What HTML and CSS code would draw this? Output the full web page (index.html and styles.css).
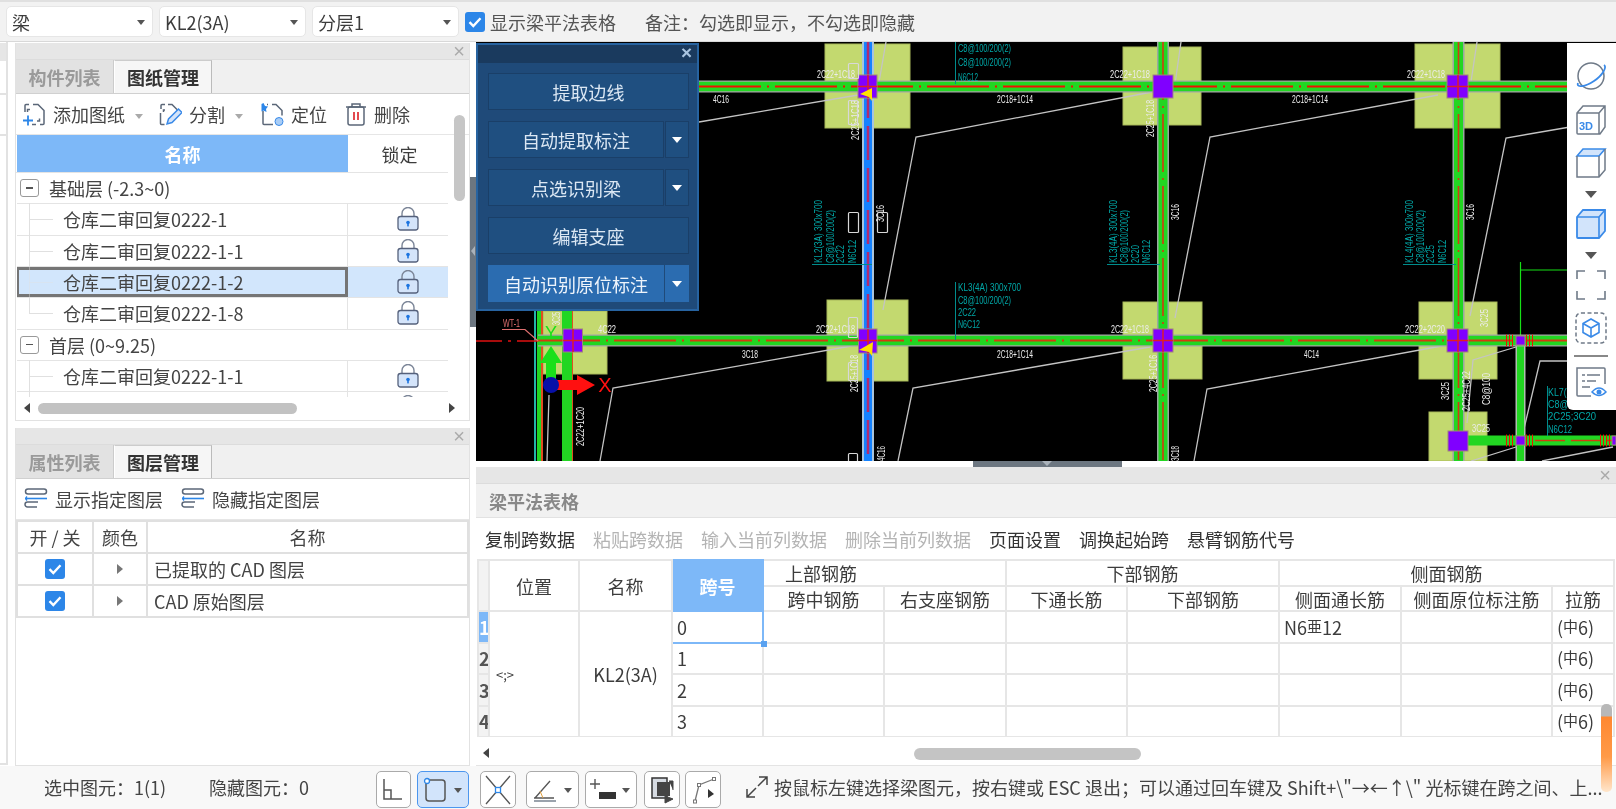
FILE: index.html
```html
<!DOCTYPE html>
<html lang="zh-CN">
<head>
<meta charset="utf-8">
<title>梁平法表格</title>
<link rel="stylesheet" href="styles.css">
</head>
<body>
<svg class="defs" width="0" height="0" aria-hidden="true">
  <defs>
    <symbol id="lock" viewBox="0 0 22 24">
      <path d="M5 10V6.5a6 6 0 0 1 12 0V10" fill="none" stroke="#7c8698" stroke-width="1.4"/>
      <rect x="1" y="9.5" width="20" height="13.5" rx="2.5" fill="#d4e4fa" stroke="#55617c" stroke-width="1.3"/>
      <circle cx="11" cy="15.5" r="1.8" fill="#1c74e0"/><rect x="10.2" y="16" width="1.6" height="3.4" fill="#1c74e0"/>
    </symbol>
    <symbol id="check" viewBox="0 0 20 20">
      <rect x="0" y="0" width="20" height="20" rx="3" fill="#2c86e8"/>
      <path d="M4.5 10.2l3.8 3.8 7.2-7.8" fill="none" stroke="#fff" stroke-width="2.4"/>
    </symbol>
    <symbol id="layer" viewBox="0 0 24 24">
      <rect x="1.5" y="2" width="21" height="5" rx="2.5" fill="none" stroke="#5b6778" stroke-width="1.5"/>
      <path d="M1 11.5h22" stroke="#2c86e8" stroke-width="1.6"/><path d="M3 9.5q-2 2 0 4" fill="none" stroke="#2c86e8" stroke-width="1.5"/>
      <path d="M13 20H3.5a2.5 2.5 0 0 1 0-5H14" fill="none" stroke="#5b6778" stroke-width="1.5"/>
    </symbol>
  </defs>
</svg>
<div class="app">
  <header class="topbar">
    <div class="select">梁<i class="caret"></i></div>
    <div class="select">KL2(3A)<i class="caret"></i></div>
    <div class="select">分层1<i class="caret"></i></div>
    <svg class="chk top-chk" width="20" height="20"><use href="#check"/></svg>
    <span class="top-label">显示梁平法表格</span>
    <span class="top-note">备注：勾选即显示，不勾选即隐藏</span>
  </header>

  <main class="main">
    <div class="side-strip"><div class="strip-title"></div><div class="strip-a"></div><div class="strip-b"></div></div>

    <div class="left">
      <section class="panel panel-top">
        <div class="titlebar"><span class="x">×</span></div>
        <div class="tabs"><span class="tab">构件列表</span><span class="tab on">图纸管理</span></div>
        <div class="tools">
          <svg class="ico" width="24" height="24" viewBox="0 0 24 24"><path d="M3 10V3.5a1 1 0 0 1 1-1h3M11 2.5h5l6 6v13a1 1 0 0 1-1 1h-3M22 12v4M10 22.5h4M8 7.5H5.5v2.5M15 19h2.5v-2.5" fill="none" stroke="#5b6778" stroke-width="1.5"/><path d="M1 18.5h10M6 13.5v10" stroke="#2c86e8" stroke-width="1.8"/></svg>
          <span class="lbl">添加图纸</span><i class="caret grey c1"></i>
          <svg class="ico i2" width="24" height="24" viewBox="0 0 24 24"><path d="M3 7V3.5a1 1 0 0 1 1-1h3M10 2.5h4l5 5v2M2.5 11v10.500a1 1 0 0 0 1 1h3M7 8H5.500v2" fill="none" stroke="#5b6778" stroke-width="1.5"/><path d="M9 22l1.500-5 10-10 3.500 3.500-10 10z" fill="#d4e4fa" stroke="#3a8ae8" stroke-width="1.5"/></svg>
          <span class="lbl">分割</span><i class="caret grey c2"></i>
          <svg class="ico i3" width="24" height="24" viewBox="0 0 24 24"><path d="M3 9v12.500a1 1 0 0 0 1 1h9M12 2.500h4l6 6v5M7 2.500h1" fill="none" stroke="#5b6778" stroke-width="1.500"/><path d="M1.500 2l2-1 1.500 3 3 .5-2 2.500.500 3-3-1.500-2 1z" fill="#2c86e8"/><circle cx="19" cy="19.500" r="4" fill="#a9cdf6" stroke="#3a8ae8"/></svg>
          <span class="lbl">定位</span>
          <svg class="ico i4" width="22" height="24" viewBox="0 0 22 24"><path d="M1 5h20M7 4.500V2h8v2.500" fill="none" stroke="#5b6778" stroke-width="1.500"/><rect x="3" y="5" width="16" height="18" rx="2" fill="none" stroke="#5b6778" stroke-width="1.500"/><path d="M9 10v8M13 10v8" stroke="#e0383e" stroke-width="1.800"/></svg>
          <span class="lbl">删除</span>
        </div>
        <div class="tree">
          <div class="tree-head"><span class="th-name">名称</span><span class="th-lock">锁定</span></div>
          <div class="tree-body">
            <div class="row group"><span class="exp"></span>基础层 (-2.3~0)</div>
            <div class="row"><span class="nm">仓库二审回复0222-1</span><span class="lk"><svg width="22" height="24"><use href="#lock"/></svg></span></div>
            <div class="row"><span class="nm">仓库二审回复0222-1-1</span><span class="lk"><svg width="22" height="24"><use href="#lock"/></svg></span></div>
            <div class="row sel"><span class="nm">仓库二审回复0222-1-2</span><span class="lk"><svg width="22" height="24"><use href="#lock"/></svg></span></div>
            <div class="row last"><span class="nm">仓库二审回复0222-1-8</span><span class="lk"><svg width="22" height="24"><use href="#lock"/></svg></span></div>
            <div class="row group"><span class="exp"></span>首层 (0~9.25)</div>
            <div class="row"><span class="nm">仓库二审回复0222-1-1</span><span class="lk"><svg width="22" height="24"><use href="#lock"/></svg></span></div>
            <div class="row"><span class="nm">仓库二审回复0222-1-2</span><span class="lk"><svg width="22" height="24"><use href="#lock"/></svg></span></div>
          </div>
          <div class="vscroll"></div>
          <div class="hscroll"><i class="arr-l"></i><span class="thumb"></span><i class="arr-r"></i></div>
        </div>
      </section>

      <section class="panel panel-bot">
        <div class="titlebar"><span class="x">×</span></div>
        <div class="tabs"><span class="tab">属性列表</span><span class="tab on">图层管理</span></div>
        <div class="tools tools2">
          <svg class="ico" width="24" height="24"><use href="#layer"/></svg><span class="lbl">显示指定图层</span>
          <svg class="ico i5" width="24" height="24"><use href="#layer"/></svg><span class="lbl">隐藏指定图层</span>
        </div>
        <table class="layers">
          <colgroup><col class="lc1"><col class="lc2"><col></colgroup>
          <tr><th>开 / 关</th><th>颜色</th><th>名称</th></tr>
          <tr><td class="ctr"><svg class="chk" width="20" height="20"><use href="#check"/></svg></td><td class="ctr"><i class="tri"></i></td><td class="nm2">已提取的 CAD 图层</td></tr>
          <tr><td class="ctr"><svg class="chk" width="20" height="20"><use href="#check"/></svg></td><td class="ctr"><i class="tri"></i></td><td class="nm2">CAD 原始图层</td></tr>
        </table>
      </section>
    </div>

    <div class="gutter"><div class="grip"><i></i></div></div>

    <div class="right">
      <div class="canvas">
        <svg class="cad" width="1140" height="419" viewBox="476 42 1140 419" font-family="Liberation Sans, sans-serif">
          <g fill="#c3d96f" stroke="#a8b85a">
            <rect x="825" y="44" width="85" height="84"/><rect x="1123" y="47" width="78" height="78"/><rect x="1415" y="44" width="85" height="84"/>
            <rect x="827" y="300" width="81" height="81"/><rect x="1123" y="302" width="79" height="77"/><rect x="1419" y="302" width="78" height="77"/>
            <rect x="543" y="311" width="64" height="63"/><rect x="1429" y="412" width="58" height="49"/>
          </g>
          <!-- diagonal wall outlines -->
          <g fill="none" stroke="#c4c4c4" stroke-width="1.300">
            <path d="M699 122L858 95M886 42L878 88M883 310L916 137L1152 92M1181 42L1173 98M1175 318L1210 137L1438 95M1477 42L1469 95M1470 316L1506 138L1570 127"/>
            <path d="M600 461L613 388L857 345M898 461L913 388L1150 347M1194 461L1207 389L1447 345M1467 423L1473 360L1516 347M1523 433L1540 361H1567M1471 461L1516 447M1542 461L1613 447M547 461L549 395"/>
          </g>
          <!-- left vertical members -->
          <path d="M535 311V461" stroke="#30f0e0" stroke-width="1.500"/><path d="M539 311V461" stroke="#22d622" stroke-width="4"/><path d="M542 311V461" stroke="#e05020" stroke-width="2"/>
          <path d="M567.500 311V461" stroke="#22d622" stroke-width="11"/><path d="M572.500 311V461" stroke="#e05020" stroke-width="1"/>
          <path d="M476 341H538" stroke="#e01010" stroke-width="1.500" stroke-dasharray="26 6 3 6"/>
          <!-- beams vertical -->
          <g fill="none">
            <path d="M868 42V461" stroke="#a9c4dc" stroke-width="12"/><path d="M868 42V461" stroke="#1482ff" stroke-width="8"/><path d="M868 42V461" stroke="#b02a70" stroke-width="2.500" stroke-dasharray="34 8"/>
            <path d="M1163 42V461M1458.500 42V461" stroke="#9aa8a0" stroke-width="12"/><path d="M1163 42V461M1458.500 42V461" stroke="#22d622" stroke-width="9"/><path d="M1163 42V461M1458.500 42V461" stroke="#d43a10" stroke-width="1.600" stroke-dasharray="58 6 2 6"/>
            <path d="M1520.500 345V461" stroke="#b0c0b0" stroke-width="10"/><path d="M1520.500 345V461" stroke="#22d622" stroke-width="7"/>
            <path d="M1520.500 262V336M1521 270H1570" stroke="#16e016" stroke-width="1.200"/>
          </g>
          <!-- beams horizontal -->
          <g fill="none">
            <path d="M699 86.500H1570M538 340.500H1570" stroke="#a5a5a5" stroke-width="12"/><path d="M699 86.500H1570M538 340.500H1570" stroke="#22d622" stroke-width="9.500"/>
            <path d="M699 86.500H1570" stroke="#f01000" stroke-width="1.800" stroke-dasharray="62 6 2 6"/><path d="M538 340.500H1570" stroke="#d43a10" stroke-width="1.800" stroke-dasharray="62 6 2 6"/>
            <path d="M1468 440.500H1616" stroke="#22d622" stroke-width="10"/><path d="M1535 440.500H1616" stroke="#d43a10" stroke-width="1.500" stroke-dasharray="30 6"/>
            <path d="M1506 340.500H1515M1526 340.500H1535M1506 440.500H1515M1526 440.500H1535M1600 440.500H1611" stroke="#f01000" stroke-width="12" stroke-dasharray="1 2"/>
          </g>
          <!-- columns -->
          <g fill="#8000ff" stroke="#a08878" stroke-width="1">
            <rect x="858" y="75" width="19" height="23"/><rect x="1153" y="75" width="20" height="23"/><rect x="1447" y="75" width="21" height="23"/>
            <rect x="858.500" y="329" width="18.500" height="24"/><rect x="1153" y="329" width="20" height="23"/><rect x="1447" y="329" width="21" height="23"/>
            <rect x="563" y="329" width="19.500" height="23"/><rect x="1448" y="431" width="20" height="20"/><rect x="1516" y="336" width="9" height="9"/><rect x="1516" y="436" width="9" height="9"/><rect x="1612" y="436" width="4" height="9"/>
          </g>
          <path d="M1458 75V98M1447 86.500H1468M1163 329V352M1153 340.500H1173M1458 329V352M1447 340.500H1468M868 75V98M858 86.500H877M868 329V353M858 340.500H877M573 329V352M563 340.500H582" stroke="#e02020" stroke-width="1.400"/>
          <path d="M872 88l-12 6 9 3 3 4zM873 342l-14 8 10 2 3 4z" fill="#ffe000"/>
          <!-- white labels -->
          <g fill="#ececec" font-size="10">
            <text x="713" y="103" textLength="16" lengthAdjust="spacingAndGlyphs">4C16</text>
            <text x="817" y="78" textLength="38" lengthAdjust="spacingAndGlyphs">2C22+1C18</text>
            <text x="1110" y="78" textLength="40" lengthAdjust="spacingAndGlyphs">2C22+1C18</text>
            <text x="1407" y="78" textLength="38" lengthAdjust="spacingAndGlyphs">2C22+1C18</text>
            <text x="997" y="103" textLength="36" lengthAdjust="spacingAndGlyphs">2C18+1C14</text>
            <text x="1292" y="103" textLength="36" lengthAdjust="spacingAndGlyphs">2C18+1C14</text>
            <text x="598" y="333" textLength="18" lengthAdjust="spacingAndGlyphs">4C22</text>
            <text x="816" y="333" textLength="39" lengthAdjust="spacingAndGlyphs">2C22+1C18</text>
            <text x="742" y="358" textLength="16" lengthAdjust="spacingAndGlyphs">3C18</text>
            <text x="997" y="358" textLength="36" lengthAdjust="spacingAndGlyphs">2C18+1C14</text>
            <text x="1111" y="333" textLength="38" lengthAdjust="spacingAndGlyphs">2C22+1C18</text>
            <text x="1405" y="333" textLength="40" lengthAdjust="spacingAndGlyphs">2C22+2C20</text>
            <text x="1304" y="358" textLength="15" lengthAdjust="spacingAndGlyphs">4C14</text>
            <text x="1472" y="432" textLength="18" lengthAdjust="spacingAndGlyphs">3C25</text>
            <text transform="translate(859 140) rotate(-90)" textLength="40" lengthAdjust="spacingAndGlyphs">2C25+1C18</text>
            <text transform="translate(884 222) rotate(-90)" textLength="17" lengthAdjust="spacingAndGlyphs">3C16</text>
            <text transform="translate(1154 137) rotate(-90)" textLength="37" lengthAdjust="spacingAndGlyphs">2C25+1C18</text>
            <text transform="translate(1179 220) rotate(-90)" textLength="16" lengthAdjust="spacingAndGlyphs">3C16</text>
            <text transform="translate(1474 220) rotate(-90)" textLength="16" lengthAdjust="spacingAndGlyphs">3C16</text>
            <text transform="translate(858 392) rotate(-90)" textLength="37" lengthAdjust="spacingAndGlyphs">2C25+1C18</text>
            <text transform="translate(885 461) rotate(-90)" textLength="15" lengthAdjust="spacingAndGlyphs">4C16</text>
            <text transform="translate(1157 392) rotate(-90)" textLength="37" lengthAdjust="spacingAndGlyphs">2C25+1C16</text>
            <text transform="translate(1179 461) rotate(-90)" textLength="15" lengthAdjust="spacingAndGlyphs">3C18</text>
            <text transform="translate(584 446) rotate(-90)" textLength="39" lengthAdjust="spacingAndGlyphs">2C22+1C20</text>
            <text transform="translate(560 325) rotate(-90)" textLength="13" lengthAdjust="spacingAndGlyphs">3C25</text>
            <text transform="translate(1488 327) rotate(-90)" textLength="18" lengthAdjust="spacingAndGlyphs">3C25</text>
            <text transform="translate(1449 400) rotate(-90)" textLength="18" lengthAdjust="spacingAndGlyphs">3C25</text>
            <text transform="translate(1470 411) rotate(-90)" textLength="40" lengthAdjust="spacingAndGlyphs">2C25+4C22</text>
            <text transform="translate(1490 405) rotate(-90)" textLength="32" lengthAdjust="spacingAndGlyphs">C8@100</text>
          </g>
          <g fill="none" stroke="#d8d8d8" stroke-width="1.200">
            <rect x="848.500" y="212.500" width="10" height="20" rx="1"/><rect x="877.500" y="212.500" width="10" height="20" rx="1"/>
            <rect x="848.500" y="63.500" width="10" height="15" rx="1"/><rect x="848.500" y="317.500" width="9" height="20" rx="1"/>
            <rect x="848.500" y="453.500" width="9" height="12" rx="1"/><rect x="848.500" y="362.500" width="9" height="18" rx="1"/><rect x="848.500" y="100.500" width="9" height="24" rx="1"/>
          </g>
          <!-- teal labels -->
          <g fill="#00a8a8" font-size="10">
            <text transform="translate(822 263) rotate(-90)" textLength="63" lengthAdjust="spacingAndGlyphs">KL2(3A) 300x700</text>
            <text transform="translate(834 263) rotate(-90)" textLength="53" lengthAdjust="spacingAndGlyphs">C8@100/200(2)</text>
            <text transform="translate(844 263) rotate(-90)" textLength="18" lengthAdjust="spacingAndGlyphs">2C22</text>
            <text transform="translate(856 263) rotate(-90)" textLength="23" lengthAdjust="spacingAndGlyphs">N6C12</text>
            <text transform="translate(1117 263) rotate(-90)" textLength="63" lengthAdjust="spacingAndGlyphs">KL3(4A) 300x700</text>
            <text transform="translate(1128 263) rotate(-90)" textLength="53" lengthAdjust="spacingAndGlyphs">C8@100/200(2)</text>
            <text transform="translate(1139 263) rotate(-90)" textLength="18" lengthAdjust="spacingAndGlyphs">2C20</text>
            <text transform="translate(1150 263) rotate(-90)" textLength="23" lengthAdjust="spacingAndGlyphs">N6C12</text>
            <text transform="translate(1413 263) rotate(-90)" textLength="63" lengthAdjust="spacingAndGlyphs">KL4(4A) 300x700</text>
            <text transform="translate(1424 263) rotate(-90)" textLength="53" lengthAdjust="spacingAndGlyphs">C8@100/200(2)</text>
            <text transform="translate(1434 263) rotate(-90)" textLength="18" lengthAdjust="spacingAndGlyphs">2C25</text>
            <text transform="translate(1446 263) rotate(-90)" textLength="23" lengthAdjust="spacingAndGlyphs">N6C12</text>
            <text x="958" y="66" textLength="53" lengthAdjust="spacingAndGlyphs">C8@100/200(2)</text>
            <text x="958" y="82" textLength="18" lengthAdjust="spacingAndGlyphs" visibility="hidden">2C22</text>
            <text x="958" y="291" textLength="63" lengthAdjust="spacingAndGlyphs">KL3(4A) 300x700</text>
            <text x="958" y="304" textLength="53" lengthAdjust="spacingAndGlyphs">C8@100/200(2)</text>
            <text x="958" y="316" textLength="18" lengthAdjust="spacingAndGlyphs">2C22</text>
            <text x="958" y="328" textLength="22" lengthAdjust="spacingAndGlyphs">N6C12</text>
            <text x="958" y="52" textLength="53" lengthAdjust="spacingAndGlyphs">C8@100/200(2)</text>
            <text x="958" y="81" textLength="20" lengthAdjust="spacingAndGlyphs">N6C12</text>
            <text x="1548" y="396" textLength="48" lengthAdjust="spacingAndGlyphs">KL7(1) 300x</text>
            <text x="1548" y="408" textLength="48" lengthAdjust="spacingAndGlyphs">C8@100/20</text>
            <text x="1548" y="420" textLength="48" lengthAdjust="spacingAndGlyphs">2C25;3C20</text>
            <text x="1548" y="433" textLength="24" lengthAdjust="spacingAndGlyphs">N6C12</text>
          </g>
          <path d="M812 264.500H872M1107 264.500H1160M1403 264.500H1456M955.500 42V84M955.500 282V340M1547.500 386V436" stroke="#008c8c" fill="none"/>
          <!-- wall mark and axes -->
          <text x="503" y="327" fill="#e07070" font-size="10" textLength="17" lengthAdjust="spacingAndGlyphs">WT-1</text>
          <path d="M502 329.500H525L538 341" fill="none" stroke="#e07070" stroke-width="1.200"/>
          <path d="M551 346l11 17h-6v22h-10v-22h-6z" fill="#1ae01a"/>
          <text x="551" y="339" fill="#1ae01a" font-size="18" text-anchor="middle">Y</text>
          <path d="M557 380h20v-5l18 10-18 10v-5h-20z" fill="#ff1010"/>
          <circle cx="551" cy="385" r="8" fill="#0810a8"/>
          <text x="605" y="392" fill="#ff1010" font-size="20" text-anchor="middle">X</text>
        </svg>

        <div class="float">
          <div class="float-title"><span>×</span></div>
          <div class="fbtn"><span class="fmain">提取边线</span></div>
          <div class="fbtn"><span class="fmain">自动提取标注</span><span class="farr"></span></div>
          <div class="fbtn"><span class="fmain">点选识别梁</span><span class="farr"></span></div>
          <div class="fbtn"><span class="fmain">编辑支座</span></div>
          <div class="fbtn act"><span class="fmain">自动识别原位标注</span><span class="farr"></span></div>
        </div>

        <div class="viewbar">
          <svg width="32" height="32" viewBox="0 0 32 32"><circle cx="16" cy="15" r="13" fill="none" stroke="#6f7a88" stroke-width="1.500"/><path d="M3 22C1 27 10 26 19 20S32 6 29 4" fill="none" stroke="#3a8ae8" stroke-width="1.800"/></svg>
          <svg width="32" height="32" viewBox="0 0 32 32"><path d="M2 9l6-7h22v21l-5 7H3a1 1 0 0 1-1-1zM2 9h22l6-7M24 9v21" fill="#fff" stroke="#6f7a88" stroke-width="1.500"/><text x="4" y="26" font-family="Liberation Sans, sans-serif" font-size="11" font-weight="700" fill="#3a8ae8">3D</text></svg>
          <svg width="32" height="32" viewBox="0 0 32 32"><path d="M2 9l6-7h22l-6 7z" fill="#d2e4fb" stroke="#3a8ae8" stroke-width="1.600"/><path d="M2 9v21h22l6-7V2M24 9v21" fill="none" stroke="#6f7a88" stroke-width="1.500"/></svg>
          <i class="vb-arrow"></i>
          <svg width="32" height="32" viewBox="0 0 32 32"><path d="M2 9l6-7h22v21l-6 7H3a1 1 0 0 1-1-1z" fill="#d2e4fb" stroke="#3a8ae8" stroke-width="1.800"/><path d="M2 9h22l6-7M24 9v21" fill="none" stroke="#3a8ae8" stroke-width="1.600"/></svg>
          <i class="vb-arrow"></i>
          <svg width="32" height="32" viewBox="0 0 32 32"><path d="M2 10V2h8M22 2h8v8M30 22v8h-8M10 30H2v-8" fill="none" stroke="#6f7a88" stroke-width="1.600"/></svg>
          <svg width="32" height="32" viewBox="0 0 32 32"><rect x="1" y="1" width="30" height="30" rx="5" fill="none" stroke="#6f7a88" stroke-width="1.500" stroke-dasharray="4 2.500"/><path d="M16 7l8 4.500v9L16 25l-8-4.500v-9zM8 11.500l8 4.500 8-4.500M16 16v9" fill="none" stroke="#3a8ae8" stroke-width="1.600"/></svg>
          <div class="vb-div"></div>
          <svg width="32" height="32" viewBox="0 0 32 32"><path d="M16 30H3a1 1 0 0 1-1-1V2h27a1 1 0 0 1 1 1v15" fill="none" stroke="#6f7a88" stroke-width="1.500"/><path d="M7 9h3M12 9h13M7 15h3M12 15h9M7 21h8" stroke="#6f7a88" stroke-width="1.500"/><path d="M17 26q7-8 14 0q-7 7-14 0z" fill="#fff" stroke="#3a8ae8" stroke-width="1.500"/><circle cx="24" cy="26" r="2.500" fill="#3a8ae8"/></svg>
        </div>
      </div>

      <div class="splitbar"><div class="splitgrip"><i></i></div></div>

      <section class="bottom">
        <div class="titlebar"><span class="x">×</span></div>
        <div class="sheet-title">梁平法表格</div>
        <div class="sheet-tools">
          <span>复制跨数据</span><span class="off">粘贴跨数据</span><span class="off">输入当前列数据</span><span class="off">删除当前列数据</span><span>页面设置</span><span>调换起始跨</span><span>悬臂钢筋代号</span>
        </div>
        <div class="grid-wrap">
          <table class="grid">
            <colgroup><col class="c-rn"><col class="c-pos"><col class="c-name"><col class="c-span"><col class="c-a"><col class="c-b"><col class="c-c"><col class="c-d"><col class="c-e"><col class="c-f"><col class="c-g"></colgroup>
            <thead>
              <tr class="h1"><th rowspan="2" class="blank"></th><th rowspan="2">位置</th><th rowspan="2">名称</th><th rowspan="2" class="blue">跨号</th><th colspan="2" class="top-left">上部钢筋</th><th colspan="2">下部钢筋</th><th colspan="3">侧面钢筋</th></tr>
              <tr class="h2"><th>跨中钢筋</th><th>右支座钢筋</th><th>下通长筋</th><th>下部钢筋</th><th>侧面通长筋</th><th>侧面原位标注筋</th><th>拉筋</th></tr>
            </thead>
            <tbody>
              <tr><th class="rn on">1</th><td rowspan="4" class="pos">&lt;;&gt;</td><td rowspan="4" class="ctr">KL2(3A)</td><td class="cur">0<i class="handle"></i></td><td></td><td></td><td></td><td></td><td>N6<span class="sym">亜</span>12</td><td></td><td>(<span class="sym">中</span>6)</td></tr>
              <tr><th class="rn">2</th><td>1</td><td></td><td></td><td></td><td></td><td></td><td></td><td>(<span class="sym">中</span>6)</td></tr>
              <tr><th class="rn">3</th><td>2</td><td></td><td></td><td></td><td></td><td></td><td></td><td>(<span class="sym">中</span>6)</td></tr>
              <tr><th class="rn">4</th><td>3</td><td></td><td></td><td></td><td></td><td></td><td></td><td>(<span class="sym">中</span>6)</td></tr>
            </tbody>
          </table>
        </div>
        <div class="grid-scroll"><i class="arr-l"></i><span class="gthumb"></span></div>
      </section>
    </div>
  </main>

  <footer class="status">
    <span class="st1">选中图元：1(1)</span>
    <span class="st2">隐藏图元：0</span>
    <span class="sb b1"><svg width="22" height="24" viewBox="0 0 22 24"><path d="M2 1v20h18M2 12h7v9" fill="none" stroke="#555" stroke-width="1.500"/></svg></span>
    <span class="sb b2 on"><svg width="24" height="26" viewBox="0 0 24 26"><rect x="3" y="3" width="19" height="21" rx="3" fill="none" stroke="#555" stroke-width="1.500"/><circle cx="4" cy="4" r="2.500" fill="#fff" stroke="#2c86e8" stroke-width="1.300"/></svg><i class="caret"></i></span>
    <span class="sb b3"><svg width="28" height="30" viewBox="0 0 28 30"><path d="M2 1l24 28M26 1L2 29" stroke="#555" stroke-width="1.300"/><rect x="11.500" y="12.500" width="5" height="5" fill="#fff" stroke="#2c86e8" stroke-width="1.300"/></svg></span>
    <span class="sb b4"><svg width="26" height="24" viewBox="0 0 26 24"><path d="M3 20L18 3M2 20h20" fill="none" stroke="#555" stroke-width="1.300"/><path d="M2 23h22" stroke="#9aa2ac" stroke-width="2"/><path d="M8 13l3 7" stroke="#e0a040"/></svg><i class="caret"></i></span>
    <span class="sb b5"><svg width="28" height="24" viewBox="0 0 28 24"><path d="M1 6h10M6 1v10" stroke="#555" stroke-width="1.400"/><rect x="10" y="14" width="17" height="7" fill="#333"/></svg><i class="caret"></i></span>
    <span class="sb b6"><svg width="26" height="28" viewBox="0 0 26 28"><rect x="2" y="2" width="15" height="20" fill="#d6dbe2" stroke="#333" stroke-width="1.500"/><rect x="7" y="6" width="13" height="14" fill="#444"/><path d="M19 5h4v9M15 20l8 3-8 4z" fill="#444" stroke="#444"/></svg></span>
    <span class="sb b7"><svg width="26" height="28" viewBox="0 0 26 28"><path d="M4 25L8 9 23 3" fill="none" stroke="#777" stroke-width="1.300"/><rect x="2.500" y="24" width="3" height="3" fill="#fff" stroke="#777"/><rect x="6.500" y="7.500" width="3" height="3" fill="#fff" stroke="#777"/><rect x="21.500" y="1.500" width="3" height="3" fill="#fff" stroke="#777"/><path d="M17 13v9l6-4z" fill="#333"/></svg></span>
    <svg class="expand" width="24" height="24" viewBox="0 0 24 24"><path d="M14 2h8v8M22 2L13 11M2 14v8h8M2 22l9-9" fill="none" stroke="#444" stroke-width="1.500"/></svg>
    <span class="hint">按鼠标左键选择梁图元，按右键或 ESC 退出；可以通过回车键及 Shift+\"→←↑\" 光标键在跨之间、上...</span>
  </footer>
  <div class="orange"></div>
</div>
</body>
</html>
```
FILE: styles.css
```css
* { box-sizing: border-box; }
html, body { margin: 0; padding: 0; width: 1616px; height: 809px; overflow: hidden; background: #fafafa; }
body { font-family: "Noto Sans CJK SC", "Noto Sans", sans-serif; font-size: 18px; line-height: 1; color: #3c3c3c; }
.defs { position: absolute; }
.app { width: 1616px; height: 809px; display: flex; flex-direction: column; position: relative; filter: blur(0.4px); }

/* top bar */
.topbar { height: 42px; background: #f2f2f2; border-top: 2px solid #e0e0e0; border-bottom: 1px solid #d8d8d8; display: flex; align-items: center; padding: 0 0 0 6px; gap: 6px; flex: none; }
.select { width: 147px; height: 31px; background: #fff; border: 1px solid #e6e6e6; border-radius: 5px; display: flex; align-items: center; padding-left: 5px; position: relative; }
.caret { position: absolute; right: 7px; top: 50%; margin-top: -2px; border: 4px solid transparent; border-top: 5px solid #555; border-bottom: 0; }
.top-chk { margin-left: 0; flex: none; }
.top-label { margin-left: -1px; color: #555; }
.top-note { margin-left: 23px; color: #555; }

/* main */
.main { flex: 1; display: flex; min-height: 0; background: #fff; }
.side-strip { width: 8px; margin-right: 7px; height: 723px; background: #fff; border-right: 2px solid #e2e2e2; border-bottom: 2px solid #e2e2e2; }
.strip-title { height: 18px; margin-top: 1px; background: #e6e6e6; }
.strip-a { height: 34px; border-bottom: 2px solid #e2e2e2; }
.strip-b { height: 41px; border-bottom: 2px solid #e2e2e2; }
.left { width: 455px; display: flex; flex-direction: column; gap: 7px; padding-top: 1px; flex: none; }
.panel { background: #fff; border: 1px solid #e2e2e2; border-top: 0; position: relative; }
.panel-top { height: 378px; }
.panel-bot { height: 338px; }
.titlebar { height: 17px; background: #e6e6e6; position: relative; border-bottom: 1px solid #dcdcdc; }
.x { position: absolute; right: 4px; top: -2px; font-size: 20px; line-height: 20px; color: #aaa; font-family: "Liberation Sans", sans-serif; }
.tabs { height: 34px; background: #f0f0f0; display: flex; border-bottom: 1px solid #d0d0d0; }
.tab { width: 98px; background: #e2e2e2; color: #9a9a9a; font-weight: 700; display: flex; align-items: center; justify-content: center; border-right: 1px solid #ccc; }
.tab.on { background: #f6f6f6; color: #333; border-top: 1px solid #ccc; border-right: 1px solid #bbb; border-left: 1px solid #fff; }
.tools { height: 41px; display: flex; align-items: center; padding-left: 6px; position: relative; border-bottom: 1px solid #e6e6e6; color: #444; }
.ico { flex: none; }
.lbl { margin-left: 7px; }
.caret.grey { position: static; margin: 4px 0 0 0; border-top-color: #aaa; }
.c1 { margin-left: 10px !important; }
.c2 { margin-left: 10px !important; }
.i2 { margin-left: 15px; }
.i3 { margin-left: 17px; }
.i4 { margin-left: 18px; }
.i5 { margin-left: 18px; }
.tools2 { padding-left: 8px; }

/* tree */
.tree { position: relative; }
.tree-head { height: 38px; display: flex; border-bottom: 1px solid #e4e4e4; width: 432px; padding-left: 1px; }
.th-name { width: 331px; background: #7db8f8; color: #fff; font-weight: 700; display: flex; align-items: center; justify-content: center; }
.th-lock { flex: 1; display: flex; align-items: center; justify-content: center; padding-left: 3px; }
.tree-body { height: 224px; overflow: hidden; width: 432px; padding-left: 1px; }
.row { height: 31.33px; display: flex; border-bottom: 1px solid #e4e4e4; position: relative; color: #444; }
.row.group { align-items: center; padding-left: 32px; }
.exp { position: absolute; left: 3px; top: 6px; width: 19px; height: 18px; border: 1px solid #999; border-radius: 3px; }
.exp::after { content: ""; position: absolute; left: 5px; top: 7px; width: 7px; height: 1.5px; background: #555; }
.row .nm { width: 331px; display: flex; align-items: center; padding-left: 46px; border-right: 1px solid #e4e4e4; position: relative; }
.row .nm::before { content: ""; position: absolute; left: 12px; top: -1px; height: 32px; width: 0; border-left: 1px solid #e0e0e0; }
.row .nm::after { content: ""; position: absolute; left: 12px; top: 15px; width: 24px; border-top: 1px solid #e0e0e0; }
.row.last .nm::before { height: 16px; }
.row .lk { flex: 1; display: flex; align-items: center; justify-content: center; padding-left: 20px; }
.row.sel { background: #d2e6fc; }
.row.sel .nm { border: 3px solid #757575; border-left-width: 2px; padding-left: 44px; }
.row.sel .nm::before, .row.sel .nm::after { opacity: .4; left: 10px; }
.row.sel .nm::before { top: -3px; }
.row.sel .nm::after { top: 12px; }
.vscroll { position: absolute; left: 438px; top: -20px; width: 11px; height: 86px; border-radius: 6px; background: #c6c6c6; }
.hscroll { height: 23px; position: relative; }
.thumb { position: absolute; left: 22px; top: 6px; width: 259px; height: 11px; background: #c2c2c2; border-radius: 6px; }
.arr-l, .arr-r { position: absolute; top: 6px; border: 5px solid transparent; border-left: 0; border-right: 6px solid #444; }
.arr-l { left: 8px; }
.arr-r { left: 433px; border-right: 0; border-left: 6px solid #444; border-right-color: transparent; }

/* layers */
.layers { width: 453px; border-collapse: collapse; table-layout: fixed; color: #444; }
.layers th, .layers td { border: 1px solid #e0e0e0; border-width: 2px; height: 32px; padding: 0; font-weight: 400; text-align: center; }
.lc1 { width: 76px; }
.lc2 { width: 54px; }
.layers .nm2 { text-align: left; padding-left: 6px; }
.chk { display: block; }
.ctr .chk { margin: auto; }
.tri { display: block; margin: auto; width: 0; border: 5px solid transparent; border-right: 0; border-left: 6px solid #777; }

/* gutter */
.gutter { width: 6px; flex: none; background: #fff; }
.grip { margin-top: 135px; height: 150px; background: #6c7680; position: relative; }
.grip i { position: absolute; left: 1px; top: 69px; border: 5px solid transparent; border-left: 0; border-right: 4px solid #aab2ba; }

/* right */
.right { flex: 1; min-width: 0; display: flex; flex-direction: column; }
.canvas { height: 419px; background: #000; position: relative; overflow: hidden; flex: none; }
.cad { display: block; }
.float { position: absolute; left: 0; top: 1px; width: 223px; height: 268px; background: #1f4a79; border: 2px solid #2763a0; padding: 0 8px 0 10px; }
.float-title { margin: 0 -8px 10px -10px; height: 18px; background: #1a3a5e; position: relative; color: #a9c4e0; }
.float-title span { position: absolute; right: 5px; top: -2px; font-size: 19px; line-height: 20px; font-family: "Liberation Sans", sans-serif; font-weight: 700; }
.fbtn { height: 37px; display: flex; margin-bottom: 11px; gap: 1px; color: #dbe7f3; }
.fmain { flex: 1; background: #1f4f80; border: 1px solid #1a3f68; display: flex; align-items: center; justify-content: center; }
.farr { width: 24px; background: #1f4f80; border: 1px solid #1a3f68; position: relative; }
.farr::after { content: ""; position: absolute; left: 6px; top: 15px; border: 5.500px solid transparent; border-top: 6px solid #fff; border-bottom: 0; }
.fbtn.act .fmain, .fbtn.act .farr { background: #2b6cb0; border-color: #2b6cb0; color: #eef4fb; }
.viewbar { position: absolute; right: 0; top: 1px; width: 49px; height: 367px; background: #fff; border-radius: 0 0 0 6px; display: flex; flex-direction: column; align-items: center; padding: 18px 1px 0 0; }
.viewbar svg { display: block; flex: none; margin-bottom: 11px; }
.vb-arrow { margin: 1px 0 10px; border: 6px solid transparent; border-top: 7px solid #555; border-bottom: 0; }
.vb-div { width: 34px; height: 1.500px; background: #888; margin: 0 0 9px; }
.splitbar { height: 6px; background: #fff; position: relative; flex: none; }
.splitgrip { position: absolute; left: 497px; top: 0; width: 149px; height: 6px; background: #6c7680; }
.splitgrip i { position: absolute; left: 69px; top: 0; border: 5px solid transparent; border-top: 5px solid #aab2ba; border-bottom: 0; }
.bottom { flex: 1; min-height: 0; display: flex; flex-direction: column; height: 299px; border-bottom: 2px solid #e4e4e4; }
.bottom .titlebar { flex: none; }
.bottom .x { right: 5px; }
.sheet-title { height: 34px; flex: none; background: #f1f1f1; border-bottom: 1px solid #e2e2e2; display: flex; align-items: center; padding-left: 13px; color: #888; font-weight: 700; }
.sheet-tools { height: 41px; flex: none; display: flex; align-items: center; padding-left: 9px; gap: 18px; color: #333; }
.sheet-tools .off { color: #b4b4b4; }
.grid-wrap { height: 178px; flex: none; padding-left: 1px; }
.grid { width: 1136px; border-collapse: collapse; table-layout: fixed; color: #3c3c3c; }
.grid th, .grid td { border: 2px solid #e6e6e6; padding: 0; font-weight: 400; text-align: center; }
.c-rn { width: 11px; }
.c-pos { width: 90px; }
.c-name { width: 93px; }
.c-span { width: 91px; }
.c-a { width: 121px; }
.c-b { width: 122px; }
.c-c { width: 121px; }
.c-d { width: 152px; }
.c-e { width: 122px; }
.c-f { width: 151px; }
.c-g { width: 62px; }
.h1 th { height: 26px; }
.h2 th { height: 25px; }
.grid .blank { background: #f3f3f3; }
.grid .blue { background: #7db8f8; color: #fff; font-weight: 700; border-color: #7db8f8; }
.grid .top-left { text-align: left; padding-left: 21px; }
.grid tbody tr { height: 31.500px; }
.grid td { text-align: left; padding-left: 4px; }
.grid td.ctr { text-align: center; padding: 0; }
.grid td.pos { font-size: 13px; padding-left: 6px; }
.grid .rn { background: #f3f3f3; font-weight: 700; text-align: left; overflow: hidden; color: #555; }
.grid .rn.on { background: #7db8f8; color: #fff; }
.grid td.cur { border: 2px solid #7db8f8; position: relative; }
.handle { position: absolute; right: -5px; bottom: -5px; width: 6px; height: 6px; background: #5aa2f0; }
.sym { font-size: 15px; position: relative; top: -3px; }
.grid-scroll { height: 28px; flex: none; position: relative; background: #fff; }
.gthumb { position: absolute; left: 438px; top: 11px; width: 227px; height: 12px; border-radius: 6px; background: #c4c4c4; }
.grid-scroll .arr-l { left: 7px; top: 11px; }

/* status */
.status { height: 43px; flex: none; background: #f8f8f8; display: flex; align-items: flex-end; padding: 0 0 1px 44px; color: #444; position: relative; }
.st1, .st2 { align-self: center; flex: none; }
.st1 { width: 165px; }
.st2 { width: 167px; }
.sb { height: 37px; background: #fff; border: 1px solid #aaa; border-radius: 5px; flex: none; display: flex; align-items: center; padding-left: 5px; position: relative; }
.sb .caret { right: 6px; }
.b1 { width: 35px; }
.b2 { width: 52px; margin-left: 6px; background: #d2e4fb; border-color: #4c96ee; }
.b3 { width: 36px; margin-left: 11px; padding-left: 3px; }
.b4 { width: 53px; margin-left: 10px; }
.b5 { width: 52px; margin-left: 6px; padding-left: 3px; }
.b6 { width: 36px; margin-left: 7px; }
.b7 { width: 36px; margin-left: 5px; }
.expand { align-self: center; margin-left: 24px; flex: none; }
.hint { align-self: center; margin-left: 5px; white-space: nowrap; color: #444; flex: none; font-size: 18px; }
.orange { position: absolute; left: 1601px; top: 704px; width: 11px; height: 88px; border-radius: 5px; background: linear-gradient(#b8b8b8 0, #b8b8b8 12px, #ff8830 13px, #ff9a48 60%, #ffe6cc 100%); }
```
